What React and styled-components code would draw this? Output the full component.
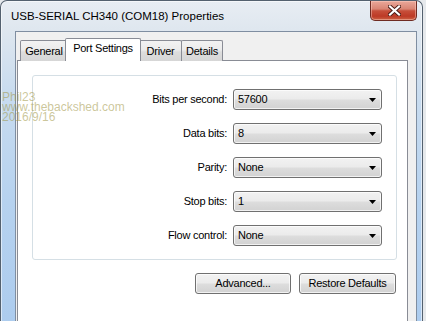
import React from 'react';
import styled, { createGlobalStyle } from 'styled-components';

const uiFont = `"Liberation Sans", Arial, sans-serif`;

const Global = createGlobalStyle`
  html, body { margin: 0; padding: 0; overflow: hidden; }
  body { background: #e6e9ec; font-family: ${uiFont}; }
  #root { width: 426px; height: 321px; overflow: hidden; position: relative; }
`;

const Window = styled.div`
  box-sizing: border-box;
  width: 423px;
  height: 340px;
  border: 1px solid #54616f;
  border-bottom: none;
  border-radius: 7px 7px 0 0;
  background: linear-gradient(180deg, #e8edf3 0px, #dfe7ef 28px, #c9dcef 90px, #b6d2ef 200px, #abcbee 340px);
  box-shadow: inset 0 0 0 1px rgba(255, 255, 255, 0.55);
  display: flex;
  flex-direction: column;
  overflow: hidden;
`;

const TitleBar = styled.div`
  height: 30px;
  flex: none;
  display: flex;
  align-items: flex-start;
  padding: 0 5px 0 10px;
`;

const Title = styled.div`
  margin-top: 8px;
  font-size: 11.5px;
  line-height: 14px;
  color: #000;
  white-space: nowrap;
`;

const CloseButton = styled.div`
  margin-left: auto;
  box-sizing: border-box;
  width: 47px;
  height: 20px;
  border: 1px solid #6e2b22;
  border-top: none;
  border-radius: 0 0 5px 5px;
  background: linear-gradient(180deg, #eaa89a 0%, #d98574 42%, #c64f3a 52%, #bd3a26 80%, #cc6244 100%);
  box-shadow: inset 0 0 0 1px rgba(255, 210, 200, 0.45);
  display: flex;
  align-items: center;
  justify-content: center;
  padding-left: 2px;
`;

const Body = styled.div`
  flex: 1;
  display: flex;
  padding: 0 5px 0 14px;
`;

const Client = styled.div`
  flex: 1;
  display: flex;
  flex-direction: column;
  border: 1px solid #7f8ea1;
  border-bottom: none;
  background: #f0f0f0;
  padding: 0 8px 0 1px;
`;

const TabStrip = styled.div`
  display: flex;
  align-items: flex-end;
  padding: 6px 0 0 3px;
  height: 23px;
`;

const Tab = styled.div`
  box-sizing: border-box;
  position: relative;
  width: ${(p) => p.$w}px;
  margin-left: ${(p) => p.$ml || 0}px;
  height: ${(p) => (p.$active ? 23 : 21)}px;
  padding-top: ${(p) => (p.$active ? 3 : 4)}px;
  border: 1px solid #898c95;
  border-bottom: none;
  border-radius: 2px 2px 0 0;
  background: ${(p) =>
    p.$active ? '#ffffff' : 'linear-gradient(180deg, #f2f2f2 0%, #ebebeb 45%, #dddddd 55%, #d6d6d6 100%)'};
  z-index: ${(p) => (p.$active ? 2 : 0)};
  font-size: 11px;
  letter-spacing: -0.25px;
  line-height: 13px;
  text-align: center;
  color: #000;
  white-space: nowrap;
`;

const Page = styled.div`
  flex: 1;
  margin-top: -1px;
  border: 1px solid #898c95;
  background: #ffffff;
  display: flex;
  flex-direction: column;
`;

const Group = styled.div`
  margin: 14px 10px 0 14px;
  border: 1px solid #d5dfe5;
  border-radius: 3px;
  padding: 13px 0;
  display: grid;
  grid-template-columns: 194px 149px;
  column-gap: 6px;
  row-gap: 13px;
`;

const Label = styled.div`
  font-size: 11px;
  letter-spacing: -0.25px;
  line-height: 21px;
  text-align: right;
  color: #000;
  white-space: nowrap;
`;

const Combo = styled.div`
  box-sizing: border-box;
  height: 21px;
  border: 1px solid #707070;
  border-radius: 3px;
  background: linear-gradient(180deg, #f2f2f2 0%, #ebebeb 48%, #dddddd 52%, #d2d2d2 100%);
  box-shadow: inset 0 0 0 1px rgba(255, 255, 255, 0.7);
  display: flex;
  align-items: center;
  justify-content: space-between;
  padding: 0 5px 0 4px;
  font-size: 11px;
  letter-spacing: -0.25px;
  line-height: 19px;
  color: #000;
`;

const ButtonRow = styled.div`
  display: flex;
  justify-content: flex-end;
  gap: 8px;
  padding: 13px 11px 0 0;
`;

const Button = styled.div`
  box-sizing: border-box;
  width: ${(p) => p.$w}px;
  height: 21px;
  border: 1px solid #707070;
  border-radius: 3px;
  background: linear-gradient(180deg, #f2f2f2 0%, #ebebeb 48%, #dddddd 52%, #d2d2d2 100%);
  box-shadow: inset 0 0 0 1px rgba(255, 255, 255, 0.7);
  font-size: 11px;
  letter-spacing: -0.25px;
  line-height: 19px;
  text-align: center;
  color: #000;
`;

const Watermark = styled.div`
  position: absolute;
  left: 2px;
  top: 92px;
  font-family: ${uiFont};
  font-size: 12px;
  line-height: 10px;
  color: rgba(160, 150, 70, 0.55);
  white-space: pre;
  pointer-events: none;
`;

const Arrow = () => (
  <svg width="7" height="4" viewBox="0 0 7 4">
    <path d="M0 0H7L3.5 4Z" fill="#000" />
  </svg>
);

const CloseGlyph = () => (
  <svg width="13" height="11" viewBox="0 0 13 11">
    <path d="M2 1.5L11 9.5M11 1.5L2 9.5" stroke="#4b1c16" strokeWidth="4" strokeLinecap="square" />
    <path d="M2 1.5L11 9.5M11 1.5L2 9.5" stroke="#ffffff" strokeWidth="2.2" strokeLinecap="square" />
  </svg>
);

const rows = [
  ['Bits per second:', '57600'],
  ['Data bits:', '8'],
  ['Parity:', 'None'],
  ['Stop bits:', '1'],
  ['Flow control:', 'None'],
];

const tabs = [
  { label: 'General', w: 48, ml: 0 },
  { label: 'Port Settings', w: 76, ml: -3, active: true },
  { label: 'Driver', w: 43, ml: -2 },
  { label: 'Details', w: 42, ml: -1 },
];

export default function App() {
  return (
    <>
      <Global />
      <Window>
        <TitleBar>
          <Title>USB-SERIAL CH340 (COM18) Properties</Title>
          <CloseButton>
            <CloseGlyph />
          </CloseButton>
        </TitleBar>
        <Body>
          <Client>
            <TabStrip>
              {tabs.map((t) => (
                <Tab key={t.label} $w={t.w} $ml={t.ml} $active={t.active}>
                  {t.label}
                </Tab>
              ))}
            </TabStrip>
            <Page>
              <Group>
                {rows.map(([label, value]) => (
                  <React.Fragment key={label}>
                    <Label>{label}</Label>
                    <Combo>
                      <span>{value}</span>
                      <Arrow />
                    </Combo>
                  </React.Fragment>
                ))}
              </Group>
              <ButtonRow>
                <Button $w={96}>Advanced...</Button>
                <Button $w={97}>Restore Defaults</Button>
              </ButtonRow>
            </Page>
          </Client>
        </Body>
      </Window>
      <Watermark>{'Phil23\nwww.thebackshed.com\n2016/9/16'}</Watermark>
    </>
  );
}
